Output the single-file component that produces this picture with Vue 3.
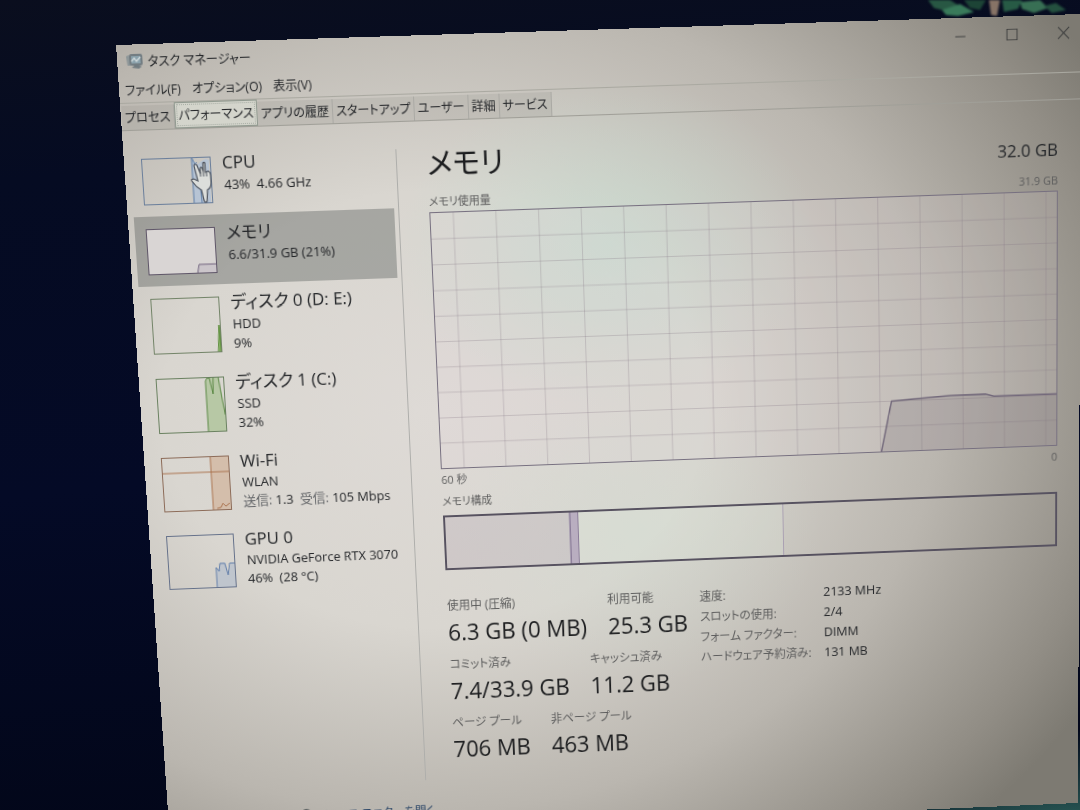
<script setup>
import { ref } from 'vue'

const menus = ['ファイル(F)', 'オプション(O)', '表示(V)']
const tabs = ['プロセス', 'パフォーマンス', 'アプリの履歴', 'スタートアップ', 'ユーザー', '詳細', 'サービス']
const activeTab = ref('パフォーマンス')

const devices = [
  {
    id: 'cpu', name: 'CPU', lines: ['43%  4.66 GHz'], color: '#5f7fa8', frame: '#6b7f9b',
    fill: '#b7c4d4', area: 'M50 0 L53 5 L56 7 L60 4 L64 2 L67 3 L67 45 L50 45 Z', line: 'M50 45 V0 L53 7 L55 5 M60 24 L62 45 M57 24 L58 45',
  },
  {
    id: 'memory', name: 'メモリ', lines: ['6.6/31.9 GB (21%)'], color: '#756780', frame: '#5f5668', paper: true,
    fill: '#cbc5ca', area: 'M49 45 L51 36 H69 V45 Z', line: 'M49 45 L51 36 H69',
  },
  {
    id: 'disk0', name: 'ディスク 0 (D: E:)', lines: ['HDD', '9%'], color: '#5f8f3e', frame: '#738468', tall: true,
    fill: '#8bb36a', area: 'M65 55 L67 28 L69 34 V55 Z', line: 'M65 55 L67 28 L68 55',
  },
  {
    id: 'disk1', name: 'ディスク 1 (C:)', lines: ['SSD', '32%'], color: '#5b8845', frame: '#6a8160', tall: true,
    fill: '#b7c8a5', area: 'M50 55 V3 L53 0 H63 L66 20 L68 38 V55 Z', line: 'M50 55 V4 Q51 0 54 1 L57 17 L58 0 H63 L65 16 L68 38',
  },
  {
    id: 'wifi', name: 'Wi-Fi', lines: ['WLAN'], net: true, color: '#ab7450', frame: '#8c6b58', tall: true,
    fill: '#d4beab', area: 'M50 0 H69 V55 H50 Z', line: 'M50 0 V55 M0 16 H69 M54 53 L58 52 L60 48 L63 51 L67 48',
  },
  {
    id: 'gpu', name: 'GPU 0', lines: ['NVIDIA GeForce RTX 3070', '46%  (28 °C)'], color: '#6480ab', frame: '#65718a', tall: true,
    fill: '#bfc5cd', area: 'M49 55 V34 L53 36 V29 H59 L61 42 L64 30 H69 V55 Z', line: 'M49 55 V34 L52 38 L53 30 H58 L61 42 L63 30 H69',
  },
]
const selected = ref('memory')

const verticals = Array.from({ length: 15 }, (_, i) => 23 + i * 43)
const horizontals = Array.from({ length: 9 }, (_, i) => (i + 1) * 10)

const stats = [
  [{ label: '使用中 (圧縮)', value: '6.3 GB (0 MB)' }, { label: '利用可能', value: '25.3 GB' }],
  [{ label: 'コミット済み', value: '7.4/33.9 GB' }, { label: 'キャッシュ済み', value: '11.2 GB' }],
  [{ label: 'ページ プール', value: '706 MB' }, { label: '非ページ プール', value: '463 MB' }],
]
const specs = [
  ['速度:', '2133 MHz'],
  ['スロットの使用:', '2/4'],
  ['フォーム ファクター:', 'DIMM'],
  ['ハードウェア予約済み:', '131 MB'],
]
</script>

<template>
  <div class="desk">
    <svg class="plant" viewBox="0 0 160 20" aria-hidden="true">
      <path d="M8 0 H30 L38 5 L30 12 L14 8 Z" fill="#285743" />
      <path d="M22 10 L40 4 L54 12 L38 16 L26 15 Z" fill="#397a5a" />
      <path d="M44 0 H66 L60 10 L50 8 Z" fill="#1d4436" />
      <path d="M69 0 H80 L77 16 L71 15 Z" fill="#877366" />
      <path d="M82 0 H102 L98 9 L84 12 Z" fill="#275a45" />
      <path d="M100 2 L120 0 L128 8 L114 13 L102 9 Z" fill="#386f54" />
      <path d="M124 6 L136 3 L146 10 L132 13 Z" fill="#24503f" />
    </svg>

    <main class="window">
      <header class="titlebar">
        <svg class="app-icon" viewBox="0 0 16 16" aria-hidden="true">
          <path d="M0 3 L3 2 L4 12 L1 12 Z" fill="#8d9698" />
          <rect x="3" y="1" width="13" height="11" rx="2" fill="#737d82" />
          <rect x="5" y="3" width="9" height="7" fill="#8ba2ac" />
          <path d="M5 8 L8 5 L10 8 L14 4" fill="none" stroke="#d3dcde" stroke-width="1.2" />
          <path d="M5 14 L9 11 L15 13 L12 15 Z" fill="#707b80" />
        </svg>
        <h1>タスク マネージャー</h1>
        <div class="controls">
          <button aria-label="最小化"><svg viewBox="0 0 14 14"><path d="M1.500 7.500 H12.500" /></svg></button>
          <button aria-label="最大化"><svg viewBox="0 0 14 14"><rect x="1.500" y="1.500" width="11" height="11" /></svg></button>
          <button aria-label="閉じる"><svg viewBox="0 0 14 14"><path d="M1 1 L13 13 M13 1 L1 13" /></svg></button>
        </div>
      </header>

      <nav class="menu">
        <button v-for="m in menus" :key="m">{{ m }}</button>
      </nav>

      <div class="tabs" role="tablist">
        <button
          v-for="t in tabs" :key="t" role="tab" :aria-selected="t === activeTab"
          :class="{ active: t === activeTab }" @click="activeTab = t"
        >{{ t }}</button>
      </div>

      <div class="body">
        <aside class="devices">
          <button
            v-for="d in devices" :key="d.id" class="device"
            :class="{ selected: d.id === selected, tall: d.tall }" @click="selected = d.id"
          >
            <span class="thumb">
              <svg :viewBox="d.tall ? '0 0 69 55' : '0 0 69 45'" preserveAspectRatio="none" aria-hidden="true">
                <rect v-if="d.paper" width="69" height="45" fill="#d9d5d4" />
                <path :d="d.area" :fill="d.fill" />
                <path :d="d.line" fill="none" :stroke="d.color" />
                <rect x="0.500" y="0.500" width="68" :height="d.tall ? 54 : 44" fill="none" :stroke="d.frame" />
              </svg>
              <svg v-if="d.id === 'cpu'" class="hand" viewBox="0 0 22 44" aria-hidden="true">
                <path d="M4 7 Q5 5 7 7 L10 15 V10 Q11 8 12 10 L13 13 V5 Q14 4 15 5 V14 L18 13 Q20 14 20 17 V24 Q20 29 16 31 L15 42 Q13 44 12 41 L10 31 Q5 28 1 22 Q0 20 3 20 L7 22 Z" fill="#dcdedb" stroke="#4f555f" stroke-width="1.200" />
                <path d="M10 14 V18 M13 13 V18 M16 14 V18" fill="none" stroke="#4f555f" />
              </svg>
            </span>
            <span class="info">
              <strong>{{ d.name }}</strong>
              <span v-for="l in d.lines" :key="l">{{ l }}</span>
              <span v-if="d.net"><em>送信:</em> 1.3 &nbsp;<em>受信:</em> 105 Mbps</span>
            </span>
          </button>
        </aside>

        <section class="detail">
          <div class="heading">
            <h2>メモリ</h2>
            <span>32.0 GB</span>
          </div>
          <div class="caption"><span>メモリ使用量</span><span>31.9 GB</span></div>
          <svg class="chart" viewBox="0 0 636 100" preserveAspectRatio="none" role="img" aria-label="メモリ使用量">
            <g class="grid">
              <path v-for="x in verticals" :key="'v' + x" :d="`M${x} 0 V100`" />
              <path v-for="y in horizontals" :key="'h' + y" :d="`M0 ${y} H636`" />
            </g>
            <path class="area" d="M454 100 L465 80 L485 79.500 L526 78.700 L562 78.600 L571 79.500 L636 79.500 V100 Z" />
            <path class="curve" d="M454 100 L465 80 L485 79.500 L526 78.700 L562 78.600 L571 79.500 L636 79.500" />
          </svg>
          <div class="axis"><span>60 秒</span><span>0</span></div>
          <div class="composition-label">メモリ構成</div>
          <div class="composition">
            <i class="used"></i><i class="modified"></i><i class="standby"></i><i class="free"></i>
          </div>
          <div class="figures">
            <div class="stats">
              <dl v-for="(row, i) in stats" :key="i">
                <div v-for="s in row" :key="s.label"><dt>{{ s.label }}</dt><dd>{{ s.value }}</dd></div>
              </dl>
            </div>
            <table>
              <tbody>
                <tr v-for="s in specs" :key="s[0]"><th scope="row">{{ s[0] }}</th><td>{{ s[1] }}</td></tr>
              </tbody>
            </table>
          </div>
        </section>
      </div>

      <footer>
        <svg viewBox="0 0 14 14" aria-hidden="true"><circle cx="7" cy="7" r="6" fill="#8e9ba0" stroke="#41484b" stroke-width="1.500" /><path d="M3 8 L6 5 L8 9 L11 5" fill="none" stroke="#dfe8e8" /></svg>
        <a href="#">リソース モニターを開く</a>
      </footer>
    </main>
  </div>
</template>

<style>
body { background: #030a22; }
</style>

<style scoped>
* { box-sizing: border-box; }
.desk {
  position: relative;
  height: 100vh;
  overflow: hidden;
  background:
    radial-gradient(ellipse 30% 12% at 100% 102%, #2c5f5a, transparent),
    linear-gradient(175deg, #0a0e1e 0%, #050b22 20%, #040a26 55%, #020617 100%);
  font-family: "Open Sans", "Noto Sans CJK JP", sans-serif;
  font-feature-settings: "palt";
  color: #25272a;
}
.plant { position: absolute; right: 0; top: 0; width: 160px; filter: blur(1px); }
button { font: inherit; font-feature-settings: inherit; color: inherit; border: 0; background: none; padding: 0; margin: 0; white-space: nowrap; }
h1, h2, dl, dd { margin: 0; font-weight: 400; }

/* The window is seen at a slight angle */
.window {
  position: relative;
  display: flex;
  flex-direction: column;
  width: calc(100% - 120px);
  min-height: 800px;
  transform-origin: 0 0;
  transform: matrix3d(1.02012, -0.032098, 0, 0.00001379, 0.08085, 1.06237, 0, 0.000078525, 0, 0, 1, 0, 116, 45, 0, 1);
  background:
    radial-gradient(ellipse 22% 20% at 50% 26%, rgba(194, 220, 206, 0.600), transparent),
    radial-gradient(ellipse 20% 20% at 52% 62%, rgba(206, 220, 208, 0.350), transparent),
    radial-gradient(ellipse 82% 78% at 31% 46%, #dedad6 0%, #d9d6d0 35%, #bab6af 66%, #918d85 90%, #7d7a72 100%);
  font-size: 12px;
}
.titlebar { display: flex; align-items: center; height: 32px; padding-left: 9px; }
.app-icon { width: 16px; height: 16px; }
h1 { flex: 1; margin-left: 5px; font-size: 12px; }
.controls { display: flex; gap: 16px; }
.controls button { width: 36px; height: 30px; }
.controls svg { width: 13px; height: 13px; fill: none; stroke: #3c3d3d; vertical-align: middle; }
.menu { display: flex; gap: 11px; height: 24px; padding-left: 6px; border-bottom: 1px solid #aaa9a1; }
.menu button { line-height: 22px; }
.tabs { display: flex; align-items: flex-end; height: 26px; border-bottom: 1px solid #a09f98; padding-left: 1px; }
.tabs button { height: 23px; padding: 0 3px; line-height: 22px; background: rgba(120, 120, 115, 0.140); border-right: 1px solid #aaa9a4; }
.tabs .active { height: 25px; background: #d4d5cc; border: 1px solid #929b91; outline: 1px dotted #a8aea5; outline-offset: -3px; }

.body { display: flex; flex: 1; padding-top: 14px; }
.devices { display: flex; flex-direction: column; flex: 0 0 266px; padding: 1px 0 0 6px; }
.device { display: flex; align-items: flex-start; gap: 12px; height: 68px; padding: 12px 0 0 11px; text-align: left; }
.device.tall { height: 79px; }
.device.selected { background: rgba(96, 101, 97, 0.420); }
.thumb { position: relative; flex: none; width: 69px; height: 45px; }
.tall .thumb { height: 55px; }
.thumb > svg:first-child { display: block; width: 100%; height: 100%; }
.hand { position: absolute; left: 48px; top: 1px; width: 22px; height: 44px; }
.info { display: flex; flex-direction: column; margin-top: -6px; font-size: 13px; line-height: 19px; white-space: pre; }
.info strong { font-size: 17px; line-height: 24px; font-weight: 400; margin-left: -1px; }
.info em { font-style: normal; color: #65676a; }

.detail { flex: 1; min-width: 0; margin-left: 4px; padding: 0 23px 0 31px; position: relative; }
.detail::before { content: ""; position: absolute; left: 0; top: 12px; bottom: 10px; border-left: 1px solid #aeaeab; }
.heading { display: flex; justify-content: space-between; align-items: center; height: 54px; }
.heading h2 { font-size: 29px; line-height: 54px; color: #1c1d1f; }
.heading span { font-size: 17px; line-height: 24px; padding-top: 14px; }
.caption, .axis { display: flex; justify-content: space-between; height: 20px; line-height: 20px; font-size: 11px; color: #5d5d5d; }
.chart { display: block; width: 100%; height: 255px; border: 1px solid #777080; background: rgba(229, 215, 222, 0.150); }
.grid path { stroke: rgba(128, 116, 128, 0.280); stroke-width: 1; vector-effect: non-scaling-stroke; }
.area { fill: rgba(110, 98, 110, 0.200); }
.curve { fill: none; stroke: #73697b; stroke-width: 1.500; vector-effect: non-scaling-stroke; }
.axis { height: 22px; line-height: 22px; }
.composition-label { height: 25px; line-height: 22px; font-size: 11px; color: #5d5d5d; }
.composition { display: flex; height: 56px; border: 2px solid #575260; }
.composition i { border-right: 1px solid #aaa0b2; }
.composition .used { flex: 203; background: rgba(172, 160, 174, 0.260); }
.composition .modified { flex: 10; background: #b9aec0; border: solid #8b7d99; border-width: 0 1px; }
.composition .standby { flex: 337; background: rgba(224, 230, 220, 0.250); }
.composition .free { flex: 450; border: 0; }

.figures { display: flex; padding-top: 27px; }
.stats { flex: 0 0 262px; }
dl { display: flex; gap: 22px; height: 61px; white-space: nowrap; }
dt { line-height: 20px; color: #5d5d5d; }
dd { font-size: 23px; line-height: 34px; color: #1c1d1f; }
table { border-collapse: collapse; align-self: flex-start; }
th, td { padding: 0; height: 21px; line-height: 21px; text-align: left; font-weight: 400; white-space: nowrap; }
th { width: 129px; color: #5d5d5d; }
td { font-size: 13px; }

footer { display: flex; align-items: center; gap: 6px; height: 44px; padding-left: 137px; }
footer svg { width: 14px; height: 14px; }
footer a { color: #2e4868; text-decoration: none; }
</style>
